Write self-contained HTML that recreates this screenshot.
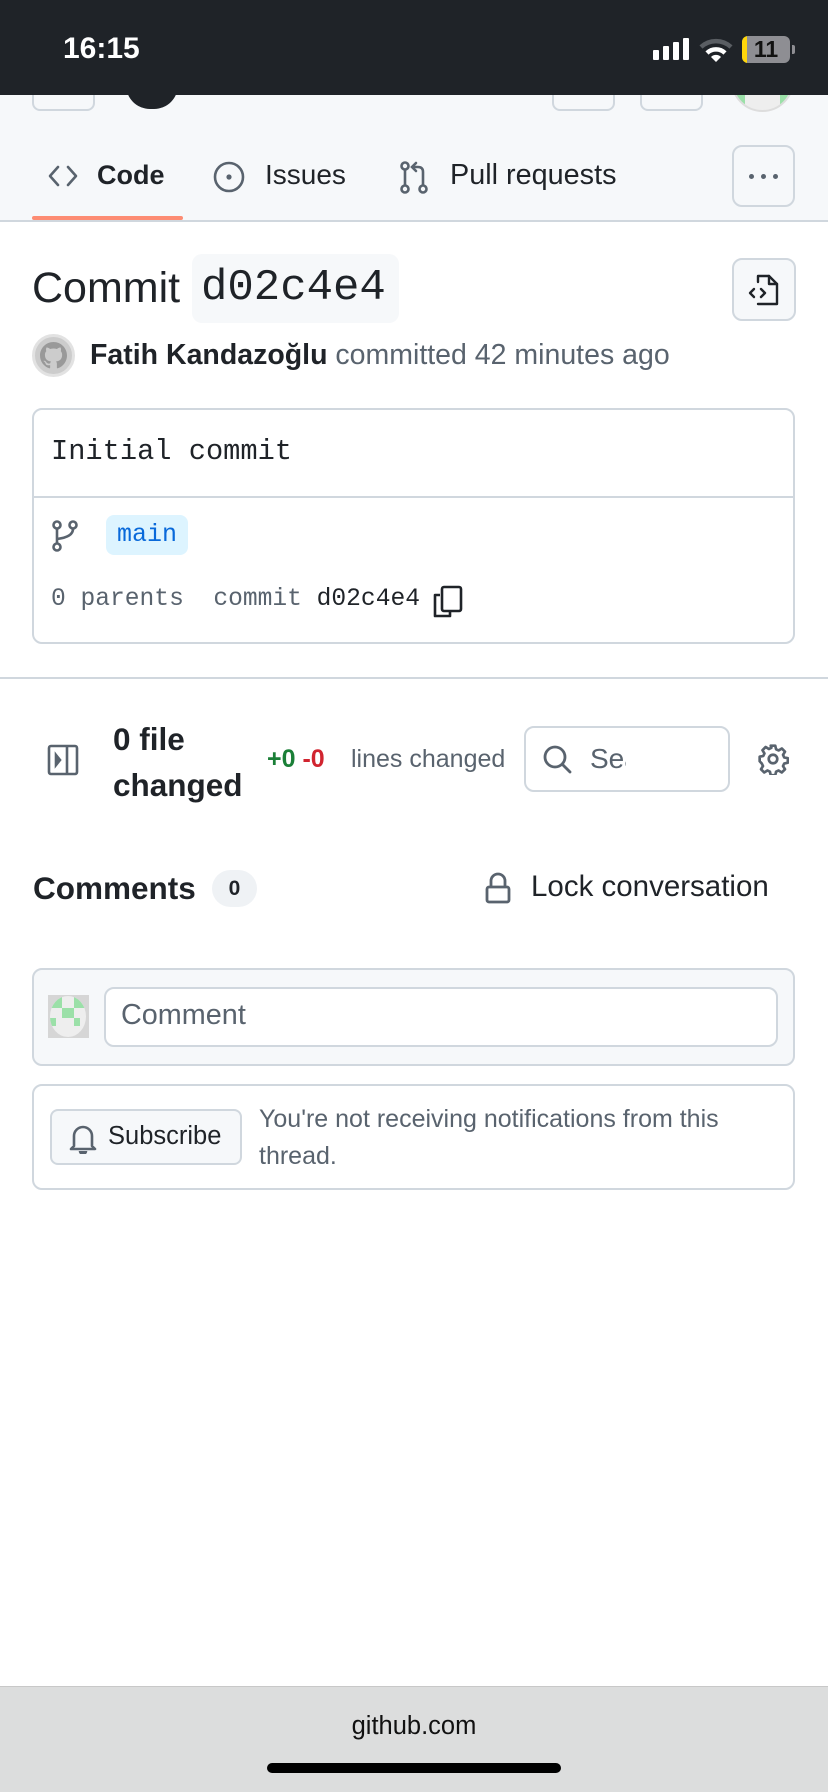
<!DOCTYPE html>
<html><head><meta charset="utf-8"><style>
*{margin:0;padding:0;box-sizing:border-box}
body{width:828px;height:1792px;background:#fff;position:relative;overflow:hidden;font-family:"Liberation Sans",sans-serif;color:#1f2328}
.a{position:absolute}
.mono{font-family:"Liberation Mono",monospace}
svg{display:block}
</style></head><body>
<!-- header -->
<div class="a" style="left:0;top:95px;width:828px;height:127px;background:#f6f8fa;border-bottom:2px solid #d0d7de"></div>
<div class="a" style="left:32px;top:80px;width:63px;height:31px;border:2px solid #d0d7de;border-radius:8px"></div>
<div class="a" style="left:126px;top:85px;width:52px;height:24px;background:#1f2328;border-radius:0 0 26px 26px"></div>
<div class="a" style="left:552px;top:80px;width:63px;height:31px;border:2px solid #d0d7de;border-radius:8px"></div>
<div class="a" style="left:640px;top:80px;width:63px;height:31px;border:2px solid #d0d7de;border-radius:8px"></div>
<div class="a" style="left:731px;top:70px;width:63px;height:42px;border-radius:0 0 32px 32px;background:#eee;border:2px solid #ddd;overflow:hidden"><div style="position:absolute;left:0;top:0;width:12px;height:40px;background:#9be0a8"></div><div style="position:absolute;right:0;top:0;width:12px;height:40px;background:#9be0a8"></div></div>
<!-- status bar -->
<div class="a" style="left:0;top:0;width:828px;height:95px;background:#1f2328"></div>
<div class="a" style="left:63px;top:32px;color:#fff;font-size:30px;font-weight:bold">16:15</div>
<div class="a" style="left:653px;top:50px;width:6px;height:10px;background:#fff;border-radius:1px"></div>
<div class="a" style="left:663px;top:46px;width:6px;height:14px;background:#fff;border-radius:1px"></div>
<div class="a" style="left:673px;top:42px;width:6px;height:18px;background:#fff;border-radius:1px"></div>
<div class="a" style="left:683px;top:38px;width:6px;height:22px;background:#fff;border-radius:1px"></div>
<svg class="a" style="left:699px;top:37px" width="34" height="26" viewBox="0 0 34 26"><path d="M2 10 A22 22 0 0 1 32 10" stroke="#5a5e63" stroke-width="4.5" fill="none"/><path d="M8 16 A13 13 0 0 1 26 16" stroke="#fff" stroke-width="4.5" fill="none"/><path d="M12 20 L17 25 L22 20 A7 7 0 0 0 12 20Z" fill="#fff"/></svg>
<div class="a" style="left:742px;top:36px;width:48px;height:27px;background:#8e8e93;border-radius:6px;overflow:hidden"><div style="width:5px;height:27px;background:#ffd60a"></div></div>
<div class="a" style="left:742px;top:36px;width:48px;height:27px;text-align:center;font-size:23px;font-weight:bold;line-height:27px;color:#111">11</div>
<div class="a" style="left:792px;top:45px;width:3px;height:9px;background:#8e8e93;border-radius:0 2px 2px 0"></div>
<!-- tabs -->
<svg class="a" style="left:47px;top:163px" width="32" height="26" viewBox="0 0 32 26" fill="none" stroke="#59636e" stroke-width="2.6" stroke-linecap="round" stroke-linejoin="round"><path d="M11 4 L3 13 L11 22"/><path d="M21 4 L29 13 L21 22"/></svg>
<div class="a" style="left:97px;top:160px;font-size:27px;font-weight:bold">Code</div>
<svg class="a" style="left:213px;top:161px" width="32" height="32" viewBox="0 0 32 32"><circle cx="16" cy="16" r="14" fill="none" stroke="#59636e" stroke-width="2.6"/><circle cx="16" cy="16" r="2.6" fill="#59636e"/></svg>
<div class="a" style="left:265px;top:159px;font-size:28px">Issues</div>
<svg class="a" style="left:399px;top:161px" width="30" height="33" viewBox="0 0 30 33" fill="none" stroke="#59636e" stroke-width="2.6" stroke-linecap="round"><circle cx="6" cy="5" r="3.5"/><circle cx="6" cy="28" r="3.5"/><circle cx="24" cy="28" r="3.5"/><path d="M6 9 V24"/><path d="M24 24 V11 Q24 6 19 6 H14"/><path d="M17 2 L13 6 L17 10"/></svg>
<div class="a" style="left:450px;top:159px;font-size:28.8px">Pull requests</div>
<div class="a" style="left:32px;top:216px;width:151px;height:4px;background:#fd8c73;border-radius:2px"></div>
<div class="a" style="left:732px;top:145px;width:63px;height:62px;border:2px solid #d0d7de;border-radius:10px;background:#f6f8fa"></div>
<div class="a" style="left:749px;top:174px;width:5px;height:5px;border-radius:50%;background:#59636e"></div>
<div class="a" style="left:761px;top:174px;width:5px;height:5px;border-radius:50%;background:#59636e"></div>
<div class="a" style="left:773px;top:174px;width:5px;height:5px;border-radius:50%;background:#59636e"></div>
<!-- commit title -->
<div class="a" style="left:32px;top:264px;font-size:43px">Commit</div>
<div class="a mono" style="left:192px;top:254px;width:207px;height:69px;background:#f6f8fa;border-radius:10px;font-size:44px;line-height:69px;padding-left:9px">d02c4e4</div>
<div class="a" style="left:732px;top:258px;width:64px;height:63px;border:2px solid #d0d7de;border-radius:10px;background:#f6f8fa"></div>
<svg class="a" style="left:746px;top:272px" width="36" height="36" viewBox="0 0 36 36" fill="none" stroke="#1f2328" stroke-width="2.4" stroke-linejoin="round" stroke-linecap="round"><path d="M12 10 V4 H23 L31 12 V32 H12"/><path d="M23 4 V12 H31"/><path d="M8 17 L4 21 L8 25"/><path d="M15 17 L19 21 L15 25"/></svg>
<div class="a" style="left:32px;top:334px;width:43px;height:43px;border-radius:50%;background:#ccc;border:3px solid #e2e2e2"></div>
<svg class="a" style="left:40px;top:342px" width="27" height="27" viewBox="0 0 16 16"><path fill="#999" d="M8 0C3.58 0 0 3.58 0 8c0 3.540 2.29 6.530 5.470 7.590.4.07.55-.17.55-.38 0-.19-.01-.82-.01-1.490-2.010.37-2.530-.49-2.690-.94-.09-.23-.48-.94-.82-1.130-.28-.15-.68-.52-.01-.53.63-.01 1.080.58 1.230.82.72 1.210 1.870.87 2.330.66.07-.52.28-.87.51-1.070-1.780-.2-3.640-.89-3.640-3.950 0-.87.31-1.590.82-2.150-.08-.2-.36-1.020.08-2.120 0 0 .67-.21 2.200.82.64-.18 1.320-.27 2-.27.68 0 1.360.09 2 .27 1.530-1.040 2.200-.82 2.200-.82.44 1.100.16 1.920.08 2.120.51.56.82 1.270.82 2.150 0 3.070-1.870 3.750-3.650 3.950.29.25.54.73.54 1.480 0 1.070-.01 1.930-.01 2.200 0 .21.15.46.55.38A8.013 8.013 0 0016 8c0-4.420-3.580-8-8-8z"/></svg>
<div class="a" style="left:90px;top:339px;font-size:28.5px;white-space:nowrap"><b>Fatih Kandazoğlu</b> <span style="color:#59636e">committed 42 minutes ago</span></div>
<!-- commit box -->
<div class="a" style="left:32px;top:408px;width:763px;height:236px;border:2px solid #d0d7de;border-radius:10px"></div>
<div class="a" style="left:32px;top:496px;width:763px;height:2px;background:#d0d7de"></div>
<div class="a mono" style="left:51px;top:435px;font-size:28.7px">Initial commit</div>
<svg class="a" style="left:52px;top:520px" width="26" height="32" viewBox="0 0 26 32" fill="none" stroke="#59636e" stroke-width="2.6"><circle cx="5" cy="5" r="3.5"/><circle cx="21" cy="5" r="3.5"/><circle cx="5" cy="27" r="3.5"/><path d="M5 9 V23"/><path d="M21 9 Q21 17 5 19"/></svg>
<div class="a mono" style="left:106px;top:515px;width:82px;height:40px;background:#ddf4ff;border-radius:8px;color:#0969da;font-size:25px;line-height:40px;text-align:center">main</div>
<div class="a mono" style="left:51px;top:586px;font-size:24.6px;white-space:pre;color:#59636e">0 parents  commit <span style="color:#1f2328">d02c4e4</span></div>
<svg class="a" style="left:432px;top:584px" width="32" height="34" viewBox="0 0 32 34" fill="none" stroke="#1f2328" stroke-width="2.6" stroke-linejoin="round"><path d="M8 11 H3 V32 H18 V27"/><rect x="10" y="3" width="19" height="24" rx="2"/></svg>
<div class="a" style="left:0;top:677px;width:828px;height:2px;background:#d0d7de"></div>
<!-- files row -->
<svg class="a" style="left:47px;top:744px" width="32" height="32" viewBox="0 0 32 32" fill="none" stroke="#59636e" stroke-width="2.6"><rect x="2" y="2" width="28" height="28" rx="2"/><path d="M20 2 V30"/><path d="M9 11 L13 16 L9 21Z" fill="#59636e"/></svg>
<div class="a" style="left:113px;top:716px;font-size:31.5px;font-weight:bold;line-height:46px">0 file<br>changed</div>
<div class="a" style="left:267px;top:745px;font-size:25px;font-weight:bold"><span style="color:#1a7f37">+0</span> <span style="color:#d1242f">-0</span></div>
<div class="a" style="left:351px;top:745px;font-size:25px;color:#59636e">lines changed</div>
<div class="a" style="left:524px;top:726px;width:206px;height:66px;border:2px solid #d0d7de;border-radius:10px"></div>
<svg class="a" style="left:543px;top:745px" width="30" height="30" viewBox="0 0 30 30" fill="none" stroke="#59636e" stroke-width="2.8" stroke-linecap="round"><circle cx="12" cy="12" r="10"/><path d="M19.5 19.5 L27 27"/></svg>
<div class="a" style="left:590px;top:743px;font-size:28px;color:#59636e;width:36px;overflow:hidden;white-space:nowrap">Search</div>
<svg class="a" style="left:757px;top:743px" width="32" height="32" viewBox="0 0 24 24" fill="none" stroke="#59636e" stroke-width="2"><circle cx="12" cy="12" r="3.2"/><path d="M10.3 2h3.4l.6 2.7 1.9.9 2.4-1.5 2.4 2.4-1.5 2.4.9 1.9 2.7.6v3.4l-2.7.6-.9 1.9 1.5 2.4-2.4 2.4-2.4-1.5-1.9.9-.6 2.7h-3.4l-.6-2.7-1.9-.9-2.4 1.5-2.4-2.4 1.5-2.4-.9-1.9L2 13.7v-3.4l2.7-.6.9-1.9-1.5-2.4 2.4-2.4 2.4 1.5 1.9-.9z" stroke-linejoin="round"/></svg>
<!-- comments -->
<div class="a" style="left:33px;top:870px;font-size:31.5px;font-weight:bold">Comments</div>
<div class="a" style="left:212px;top:870px;width:45px;height:37px;border-radius:19px;background:#eff2f5;font-size:21px;font-weight:bold;text-align:center;line-height:37px">0</div>
<svg class="a" style="left:485px;top:872px" width="26" height="32" viewBox="0 0 26 32" fill="none" stroke="#59636e" stroke-width="2.8"><path d="M6 15 V9 A7 7 0 0 1 20 9 V15"/><rect x="2" y="15" width="22" height="15" rx="2"/></svg>
<div class="a" style="left:531px;top:870px;font-size:29.5px">Lock conversation</div>
<div class="a" style="left:32px;top:968px;width:763px;height:98px;background:#f6f8fa;border:2px solid #d0d7de;border-radius:10px"></div>
<div class="a" style="left:48px;top:995px;width:41px;height:43px;background:#d6d6d6"></div>
<div class="a" style="left:50px;top:996px;width:36px;height:41px;border-radius:50%;background:#eee;overflow:hidden">
<div style="position:absolute;left:0;top:0;width:12px;height:12px;background:#9be0a8"></div><div style="position:absolute;left:24px;top:0;width:12px;height:12px;background:#9be0a8"></div><div style="position:absolute;left:12px;top:12px;width:12px;height:10px;background:#9be0a8"></div><div style="position:absolute;left:0;top:22px;width:6px;height:8px;background:#9be0a8"></div><div style="position:absolute;left:24px;top:22px;width:6px;height:8px;background:#9be0a8"></div></div>
<div class="a" style="left:104px;top:987px;width:674px;height:60px;background:#fff;border:2px solid #d0d7de;border-radius:10px"></div>
<div class="a" style="left:121px;top:999px;font-size:28.8px;color:#59636e">Comment</div>
<div class="a" style="left:32px;top:1084px;width:763px;height:106px;border:2px solid #d0d7de;border-radius:10px"></div>
<div class="a" style="left:50px;top:1109px;width:192px;height:56px;background:#f6f8fa;border:2px solid #d0d7de;border-radius:8px"></div>
<svg class="a" style="left:69px;top:1122px" width="28" height="32" viewBox="0 0 28 32" fill="none" stroke="#59636e" stroke-width="2.6" stroke-linejoin="round"><path d="M5 24 V14 A9 9 0 0 1 23 14 V24 L26 27 H2Z"/><path d="M11 29 A3 3 0 0 0 17 29" fill="#59636e"/></svg>
<div class="a" style="left:108px;top:1122px;font-size:25.5px">Subscribe</div>
<div class="a" style="left:259px;top:1101px;font-size:25px;line-height:37px;color:#59636e;width:520px">You're not receiving notifications from this thread.</div>
<!-- bottom bar -->
<div class="a" style="left:0;top:1686px;width:828px;height:106px;background:#dcdddd;border-top:1px solid #c8c8c8"></div>
<div class="a" style="left:0;top:1712px;width:828px;text-align:center;font-size:25.5px;color:#111">github.com</div>
<div class="a" style="left:267px;top:1763px;width:294px;height:10px;border-radius:5px;background:#000"></div>
</body></html>
